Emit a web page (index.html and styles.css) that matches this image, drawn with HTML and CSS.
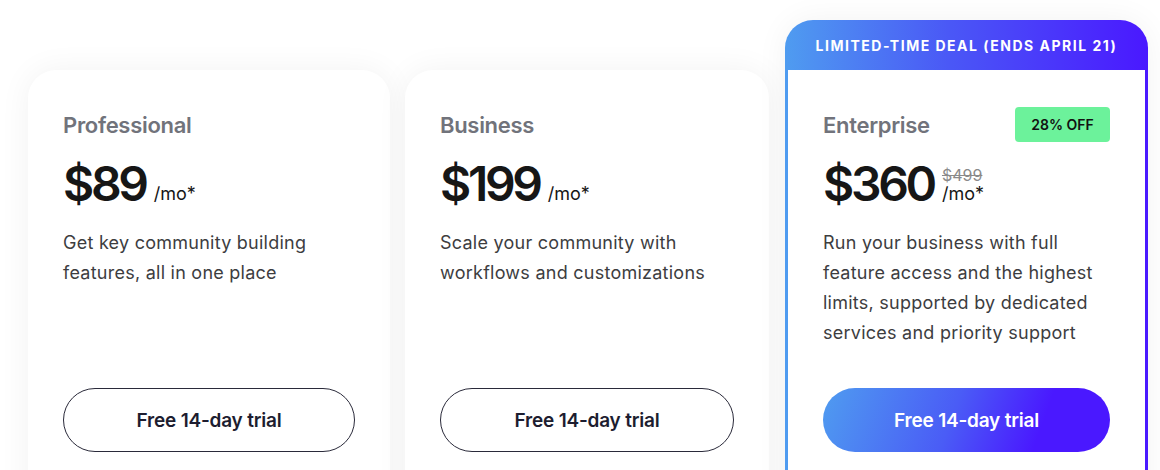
FILE: index.html
```html
<!DOCTYPE html>
<html lang="en">
<head>
<meta charset="utf-8">
<title>Pricing</title>
<link rel="stylesheet" href="styles.css">
</head>
<body>
<main class="plans">
  <section class="card plain">
    <div class="card-body">
      <div class="title-row"><h2 class="plan-name">Professional</h2></div>
      <div class="price-row"><span class="price">$89</span><span class="per"><span class="unit">/mo*</span></span></div>
      <p class="desc">Get key community building features, all in one place</p>
      <button class="btn outline">Free 14-day trial</button>
    </div>
  </section>
  <section class="card plain">
    <div class="card-body">
      <div class="title-row"><h2 class="plan-name">Business</h2></div>
      <div class="price-row"><span class="price">$199</span><span class="per"><span class="unit">/mo*</span></span></div>
      <p class="desc">Scale your community with workflows and customizations</p>
      <button class="btn outline">Free 14-day trial</button>
    </div>
  </section>
  <section class="card featured">
    <div class="deal">LIMITED-TIME DEAL (ENDS APRIL 21)</div>
    <div class="card-body">
      <div class="title-row"><h2 class="plan-name">Enterprise</h2><span class="badge">28% OFF</span></div>
      <div class="price-row"><span class="price">$360</span><span class="per"><s class="old">$499</s><span class="unit">/mo*</span></span></div>
      <p class="desc">Run your business with full feature access and the highest limits, supported by dedicated services and priority support</p>
      <button class="btn gradient">Free 14-day trial</button>
    </div>
  </section>
</main>
</body>
</html>
```
FILE: styles.css
```css
* { box-sizing: border-box; }
html, body { margin: 0; padding: 0; background: #fff; }
body {
  width: 1160px;
  height: 470px;
  overflow: hidden;
  font-family: Inter, "Liberation Sans", sans-serif;
  color: #161616;
}
.plans {
  display: grid;
  grid-template-columns: 362px 364px 364px;
  column-gap: 15px;
  padding: 20px 0 0 28px;
  align-items: start;
}
.plans .card:nth-child(3) { margin-left: 1px; }
.card {
  border-radius: 28px;
  box-shadow: 0 0 32px rgba(0, 0, 0, 0.055);
  height: 520px;
}
.plain {
  margin-top: 50px;
  background: #fff;
}
.featured {
  background: linear-gradient(90deg, #4f9cf0 0%, #4a58f6 45%, #4a18ff 100%);
  padding: 0 3px 0 3px;
  display: flex;
  flex-direction: column;
}
.deal {
  height: 50px;
  display: flex;
  align-items: center;
  justify-content: center;
  color: #fff;
  font-size: 14px;
  font-weight: 700;
  letter-spacing: 1.5px;
}
.featured .card-body {
  background: #fff;
  flex: 1;
  padding: 0 35px;
}
.card-body { padding: 0 35px; }
.title-row {
  display: flex;
  align-items: center;
  justify-content: space-between;
  height: 35px;
  margin-top: 37px;
}
.plan-name {
  margin: 0;
  font-size: 22px;
  font-weight: 600;
  color: #71737b;
  letter-spacing: -0.3px;
}
.badge {
  background: #6cf29b;
  color: #111;
  font-size: 14px;
  font-weight: 600;
  border-radius: 4px;
  width: 95px;
  height: 35px;
  display: flex;
  align-items: center;
  justify-content: center;
}
.price-row {
  display: flex;
  align-items: flex-end;
  margin-top: 17px;
  height: 50px;
}
.price {
  font-size: 48px;
  font-weight: 600;
  line-height: 50px;
  letter-spacing: -3.3px;
  color: #161616;
}
.per {
  display: flex;
  flex-direction: column;
  margin-left: 8px;
  margin-bottom: 5px;
}
.unit {
  font-size: 18px;
  line-height: 20px;
  color: #161616;
}
.old {
  font-size: 16px;
  line-height: 18px;
  color: #8a8a8a;
}
.desc {
  margin: 19px 0 0;
  font-size: 18px;
  line-height: 30px;
  color: #3d3d3f;
  height: 120px;
  letter-spacing: 0.25px;
}
.btn {
  display: block;
  width: 100%;
  height: 64px;
  margin-top: 40px;
  border-radius: 32px;
  font-family: inherit;
  font-size: 19px;
  font-weight: 600;
  cursor: pointer;
  letter-spacing: -0.2px;
}
.outline {
  background: #fff;
  border: 1px solid #2a2a3a;
  color: #1d1d30;
}
.gradient {
  border: none;
  color: #fff;
  background: linear-gradient(110deg, #4f9cf0 0%, #4a5cf6 45%, #4a18ff 75%, #4a18ff 100%);
}
```
